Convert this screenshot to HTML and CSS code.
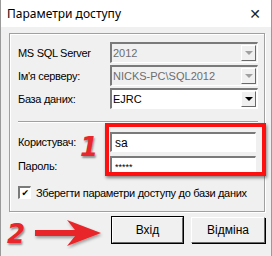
FILE: index.html
```html
<!DOCTYPE html>
<html lang="uk">
<head>
    <meta charset="UTF-8">
    <title>Параметри доступу</title>
    <link rel="stylesheet" href="styles.css">
</head>
<body>
    <div class="window">
        <div class="titlebar">
            <span class="title">Параметри доступу</span>
            <span class="close">✕</span>
        </div>
        <div class="content">
            <div class="group">
                <div class="row">
                    <label>MS SQL Server</label>
                    <div class="combo disabled"><span>2012</span><i class="drop"></i></div>
                </div>
                <div class="row">
                    <label>Ім'я серверу:</label>
                    <div class="combo disabled"><span>NICKS-PC\SQL2012</span><i class="drop"></i></div>
                </div>
                <div class="row">
                    <label>База даних:</label>
                    <div class="combo"><span>EJRC</span><i class="drop"></i></div>
                </div>
                <div class="separator"></div>
                <div class="row login">
                    <label>Користувач:</label>
                    <div class="edit">sa</div>
                </div>
                <div class="row login">
                    <label>Пароль:</label>
                    <div class="edit pass">*****</div>
                </div>
                <label class="check"><span class="box">✔</span>Зберегти параметри доступу до бази даних</label>

                <div class="mark-frame"></div>
                <div class="mark-num one">1</div>
            </div>
            <div class="buttons">
                <button class="btn default">Вхід</button>
                <button class="btn">Відміна</button>
            </div>
            <div class="mark-num two">2</div>
            <svg class="arrow" width="72" height="32" viewBox="0 0 72 32">
                <defs>
                    <filter id="sh" x="-20%" y="-40%" width="140%" height="180%">
                        <feDropShadow dx="1" dy="2" stdDeviation="1.5" flood-color="#000" flood-opacity="0.35"/>
                    </filter>
                </defs>
                <path d="M2 13 H42 L34 3 L68 16 L34 29 L42 19 H2 Z" fill="#e8262b" filter="url(#sh)"/>
            </svg>
        </div>
    </div>
</body>
</html>
```
FILE: styles.css
```css
body {
    margin: 0;
    padding: 0;
    background: #f0f0f0;
    font-family: "Liberation Sans", Arial, sans-serif;
    font-size: 11px;
}

.window {
    width: 272px;
    height: 256px;
    box-sizing: border-box;
    border-left: 1px solid #9a9a9a;
    border-right: 1px solid #9a9a9a;
    background: #f0f0f0;
    position: relative;
    overflow: hidden;
}

.titlebar {
    height: 27px;
    background: #fff;
    display: flex;
    align-items: center;
    justify-content: space-between;
    padding: 0 10px 0 6px;
}

.title {
    font-family: "Noto Sans", sans-serif;
    font-size: 12px;
    color: #000;
}

.close {
    font-family: "DejaVu Sans", sans-serif;
    font-size: 14px;
    color: #222;
}

.content {
    position: relative;
    padding: 6px 6px 0 8px;
}

.group {
    position: relative;
    border: 1px solid #a0a0a0;
    box-shadow: inset 1px 1px 0 #fff, 1px 1px 0 #fff;
    padding: 8px 6px 8px 8px;
    height: 179px;
    box-sizing: border-box;
    letter-spacing: -0.3px;
    white-space: nowrap;
}

.row {
    display: flex;
    align-items: center;
    justify-content: space-between;
    height: 21px;
    margin-bottom: 2px;
}

.row label {
    color: #000;
}

.combo, .edit {
    width: 148px;
    height: 21px;
    box-sizing: border-box;
    border-top: 2px solid #7a7a7a;
    border-left: 2px solid #7a7a7a;
    border-right: 1px solid #fff;
    border-bottom: 1px solid #fff;
    background: #fff;
    display: flex;
    align-items: center;
    justify-content: space-between;
    padding-left: 1px;
    color: #000;
    letter-spacing: 0;
}

.combo.disabled {
    background: #f0f0f0;
    color: #6d6d6d;
}

.drop {
    width: 15px;
    height: 16px;
    margin-right: 1px;
    box-sizing: border-box;
    background: #f0f0f0;
    border: 1px solid;
    border-color: #fff #696969 #696969 #fff;
    display: flex;
    align-items: center;
    justify-content: center;
}

.drop::after {
    content: "";
    border-left: 4px solid transparent;
    border-right: 4px solid transparent;
    border-top: 4px solid #000;
}

.disabled .drop::after {
    border-top-color: #a0a0a0;
}

.separator {
    height: 0;
    border-top: 1px solid #a0a0a0;
    border-bottom: 1px solid #fff;
    margin: 12px 0 9px;
}

.login {
    height: 20px;
    margin-bottom: 4px;
}

.login .edit {
    height: 20px;
    width: 146px;
    margin-right: 2px;
}

.edit {
    font-size: 12px;
    padding-left: 3px;
}

.edit.pass {
    font-size: 9px;
}

.check {
    display: flex;
    align-items: center;
    gap: 5px;
    margin-top: 10px;
}

.box {
    width: 13px;
    height: 13px;
    box-sizing: border-box;
    background: #fff;
    border-top: 2px solid #7a7a7a;
    border-left: 2px solid #7a7a7a;
    border-right: 1px solid #fff;
    border-bottom: 1px solid #fff;
    font-size: 9px;
    line-height: 10px;
    text-align: center;
    font-family: "DejaVu Sans", sans-serif;
}

.buttons {
    display: flex;
    justify-content: flex-end;
    gap: 8px;
    margin-top: 5px;
}

.btn {
    width: 74px;
    height: 26px;
    font-family: "Liberation Sans", Arial, sans-serif;
    font-size: 12px;
    background: #f0f0f0;
    border: 1px solid;
    border-color: #fff #696969 #696969 #fff;
    box-shadow: 1px 1px 0 #000;
    color: #000;
    padding: 0;
}

.btn.default {
    width: 71px;
    outline: 1px solid #000;
}

.mark-frame {
    position: absolute;
    left: 95px;
    top: 89px;
    width: 153px;
    height: 45px;
    border: 4px solid #ff1010;
    box-shadow: 1px 2px 3px rgba(0, 0, 0, 0.45);
}

.mark-num {
    position: absolute;
    font-family: "DejaVu Sans", sans-serif;
    font-weight: bold;
    font-style: italic;
    color: #e8262b;
    font-size: 26px;
    text-shadow: 1px 2px 2px rgba(0, 0, 0, 0.4);
}

.one {
    left: 70px;
    top: 98px;
}

.two {
    left: 6px;
    top: 192px;
}

.arrow {
    position: absolute;
    left: 32px;
    top: 190px;
}
```
